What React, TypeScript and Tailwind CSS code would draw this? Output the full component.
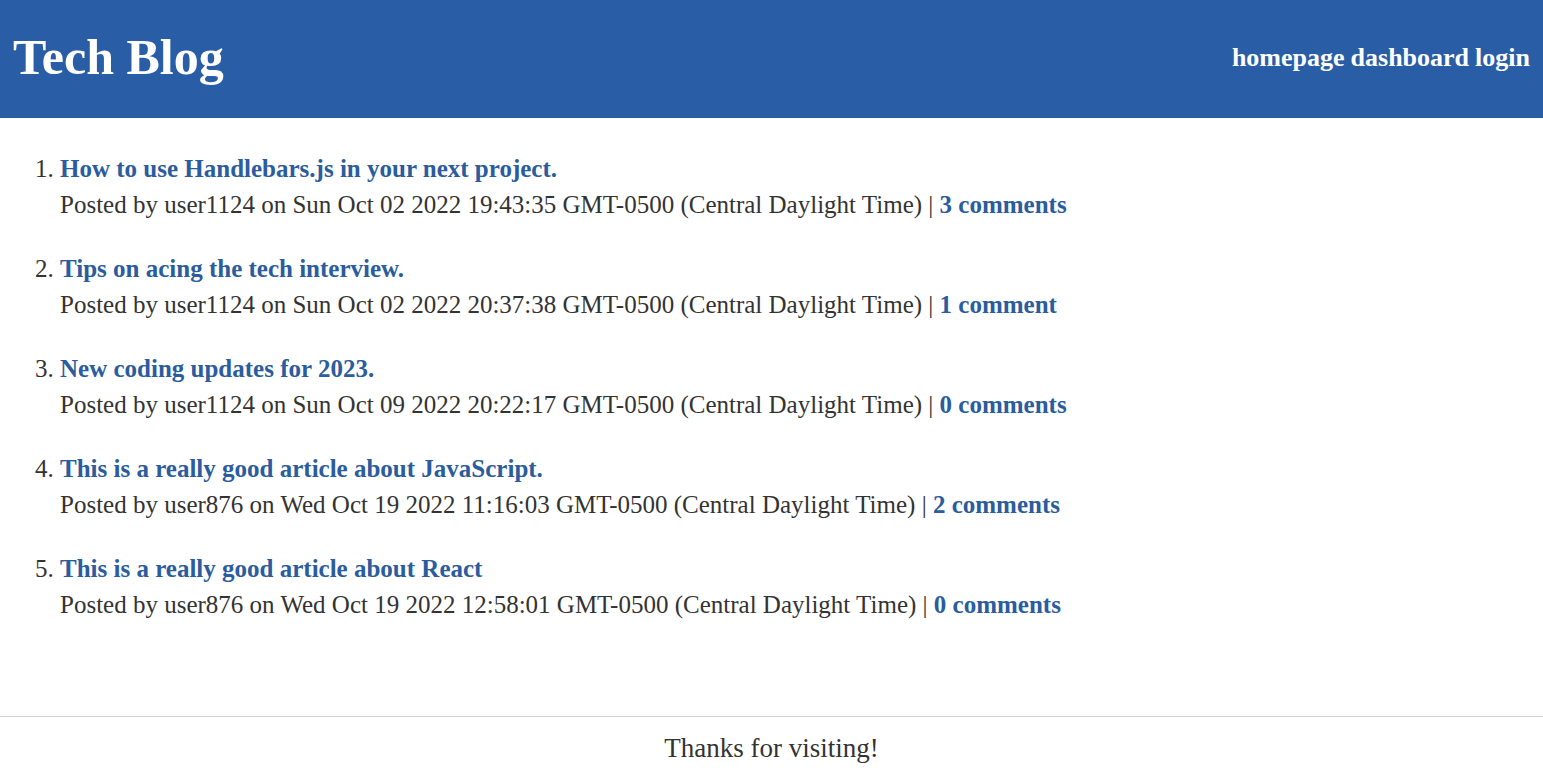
const posts = [
  {
    title: "How to use Handlebars.js in your next project.",
    user: "user1124",
    date: "Sun Oct 02 2022 19:43:35 GMT-0500 (Central Daylight Time)",
    comments: "3 comments",
  },
  {
    title: "Tips on acing the tech interview.",
    user: "user1124",
    date: "Sun Oct 02 2022 20:37:38 GMT-0500 (Central Daylight Time)",
    comments: "1 comment",
  },
  {
    title: "New coding updates for 2023.",
    user: "user1124",
    date: "Sun Oct 09 2022 20:22:17 GMT-0500 (Central Daylight Time)",
    comments: "0 comments",
  },
  {
    title: "This is a really good article about JavaScript.",
    user: "user876",
    date: "Wed Oct 19 2022 11:16:03 GMT-0500 (Central Daylight Time)",
    comments: "2 comments",
  },
  {
    title: "This is a really good article about React",
    user: "user876",
    date: "Wed Oct 19 2022 12:58:01 GMT-0500 (Central Daylight Time)",
    comments: "0 comments",
  },
];

export default function App() {
  return (
    <div className="min-h-[776px] flex flex-col bg-white text-[#333] font-['Liberation_Serif',serif]">
      {/* Header */}
      <header className="h-[118px] bg-[#295ea7] flex items-center justify-between px-[13px] text-white">
        <h1 className="text-[50px] font-bold leading-none pb-[4px]">Tech Blog</h1>
        <nav className="flex gap-[6px] text-[26px] font-bold pb-[4px]">
          <a href="#">homepage</a>
          <a href="#">dashboard</a>
          <a href="#">login</a>
        </nav>
      </header>

      {/* Liste des articles */}
      <main className="flex-1 pt-[33px]">
        <ol className="list-decimal pl-[60px] text-[25px]">
          {posts.map((p) => (
            <li key={p.title} className="mb-[28px] leading-[36px]">
              <a href="#" className="font-bold text-[#2b5c9e]">
                {p.title}
              </a>
              <div>
                Posted by {p.user} on {p.date} |{" "}
                <a href="#" className="font-bold text-[#2b5c9e]">
                  {p.comments}
                </a>
              </div>
            </li>
          ))}
        </ol>
      </main>

      {/* Pied de page */}
      <footer className="h-[60px] border-t border-[#d3d3d3] flex items-center justify-center text-[27px] pt-[3px]">
        Thanks for visiting!
      </footer>
    </div>
  );
}
